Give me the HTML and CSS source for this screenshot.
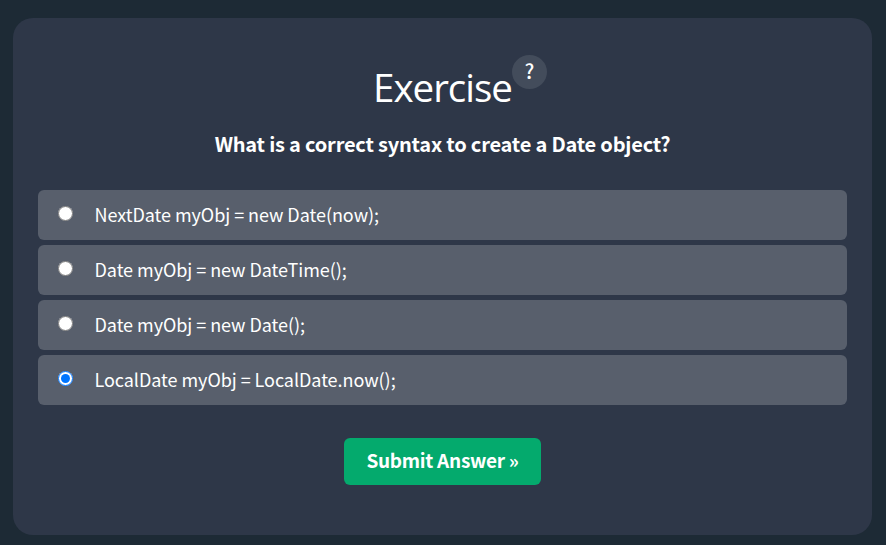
FILE: index.html
```html
<!DOCTYPE html>
<html lang="en">
<head>
<meta charset="utf-8">
<title>Exercise</title>
<link rel="stylesheet" href="styles.css">
</head>
<body>
<main class="card">
  <h2 class="title"><span class="title-text">Exercise</span><span class="help">?</span></h2>
  <p class="question">What is a correct syntax to create a Date object?</p>
  <form class="quiz">
    <label class="option"><input type="radio" name="answer"><span>NextDate myObj = new Date(now);</span></label>
    <label class="option"><input type="radio" name="answer"><span>Date myObj = new DateTime();</span></label>
    <label class="option"><input type="radio" name="answer"><span>Date myObj = new Date();</span></label>
    <label class="option"><input type="radio" name="answer" checked><span>LocalDate myObj = LocalDate.now();</span></label>
    <button class="submit" type="button">Submit Answer »</button>
  </form>
</main>
</body>
</html>
```
FILE: styles.css
```css
* { box-sizing: border-box; }
body {
  margin: 0;
  height: 545px;
  overflow: hidden;
  padding: 18px 14px 10px 13px;
  background: #1d2a35;
  color: #fff;
  font-family: "Noto Sans CJK SC", sans-serif;
}
.card {
  height: 517px;
  padding: 37px 25px 0;
  border-radius: 20px;
  background: #2e3748;
}
.title {
  display: flex;
  justify-content: center;
  height: 64px;
  margin: 0;
  padding-left: 35px;
  font-size: 38.5px;
  font-weight: 400;
  line-height: 64px;
}
.title-text {
  font-family: "Open Sans", "Noto Sans", sans-serif;
  letter-spacing: -1.03px;
}
.help {
  width: 35px;
  height: 34px;
  border-radius: 50%;
  background: #434c5b;
  font-size: 20px;
  font-weight: 500;
  line-height: 32px;
  text-align: center;
}
.question {
  height: 50px;
  margin: 0 0 21px;
  font-size: 20px;
  font-weight: 600;
  letter-spacing: -0.2px;
  line-height: 50px;
  text-align: center;
  white-space: nowrap;
}
.quiz {
  display: flex;
  flex-direction: column;
  gap: 5px;
}
.option {
  display: flex;
  align-items: center;
  height: 50px;
  padding-left: 20px;
  border-radius: 6px;
  background: #585f6c;
  font-size: 18px;
  letter-spacing: -0.05px;
  white-space: nowrap;
}
.option span {
  padding-bottom: 2px;
}
.option input {
  width: 15px;
  height: 15px;
  margin: 0 21.5px 4px 0;
}
.submit {
  align-self: center;
  width: 197px;
  height: 47px;
  margin-top: 28px;
  padding: 0 0 5px;
  border: 0;
  border-radius: 6px;
  background: #04aa6d;
  color: #fff;
  font: 600 19px "Noto Sans CJK SC", sans-serif;
  letter-spacing: -0.27px;
  white-space: nowrap;
}
```
